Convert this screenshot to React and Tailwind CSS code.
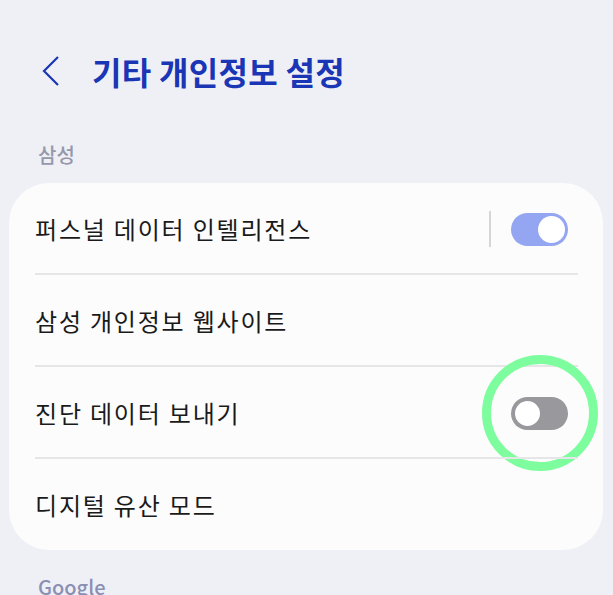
const FONT = { fontFamily: '"Noto Sans CJK KR", "Noto Sans", sans-serif' }

const Toggle = ({ on }) => {
  if (on) {
    return (
      <div className="relative w-[57px] h-[33px] rounded-full bg-[#94a5f2]">
        <div className="absolute right-[3px] top-[3px] w-[27px] h-[27px] rounded-full bg-white" />
      </div>
    )
  }
  return (
    <div className="relative w-[57px] h-[33px] rounded-full bg-[#99989d]">
      <div className="absolute left-[2px] top-[2px] w-[29px] h-[29px] rounded-full bg-white border-[2px] border-[#99989d]" />
    </div>
  )
}

const Row = ({ label, children, last }) => (
  <div className="relative h-[92px] flex items-center pl-[26px] pr-[35px]">
    <span className="text-[24px] text-[#1a1a1a] tracking-[1.8px]">{label}</span>
    <div className="ml-auto flex items-center">{children}</div>
    {!last && (
      <div className="absolute left-[26px] right-[25px] bottom-0 h-[2px] bg-[#e6e6e8]" />
    )}
  </div>
)

export default function App() {
  return (
    <div className="w-[613px] h-[595px] overflow-hidden bg-[#eff0f6]" style={FONT}>

      {/* Header */}
      <div className="flex items-center h-[60px] mt-[41px] pl-[41px]">
        <svg width="20" height="30" viewBox="0 0 20 30" fill="none">
          <path d="M17 1 L3 15 L17 29" stroke="#1a36b5" strokeWidth="2.2" />
        </svg>
        <h1 className="ml-[31px] text-[32px] font-bold text-[#1a36b5] leading-none tracking-[0.3px]">
          기타 개인정보 설정
        </h1>
      </div>

      <p className="mt-[44px] pl-[38px] text-[20px] font-medium text-[#9597ab] leading-none">
        삼성
      </p>

      {/* Samsung card */}
      <div className="mt-[18px] ml-[9px] w-[594px] bg-[#fcfcfc] rounded-[40px]">
        <Row label="퍼스널 데이터 인텔리전스">
          <div className="w-[2px] h-[36px] bg-[#d6d6d8] mr-[20px]" />
          <Toggle on />
        </Row>
        <Row label="삼성 개인정보 웹사이트" />
        <Row label="진단 데이터 보내기">
          <div className="relative">
            <Toggle on={false} />
            <div className="absolute left-1/2 top-1/2 -translate-x-1/2 -translate-y-1/2 w-[116px] h-[116px] rounded-full border-[9px] border-[#7dfd9d]" />
          </div>
        </Row>
        <div className="h-[91px] flex items-center px-[26px]">
          <span className="text-[24px] text-[#1a1a1a] tracking-[1.8px]">디지털 유산 모드</span>
        </div>
      </div>

      <p className="mt-[27px] pl-[38px] text-[20px] font-medium text-[#8a8fb4] leading-none">
        Google
      </p>

    </div>
  )
}
